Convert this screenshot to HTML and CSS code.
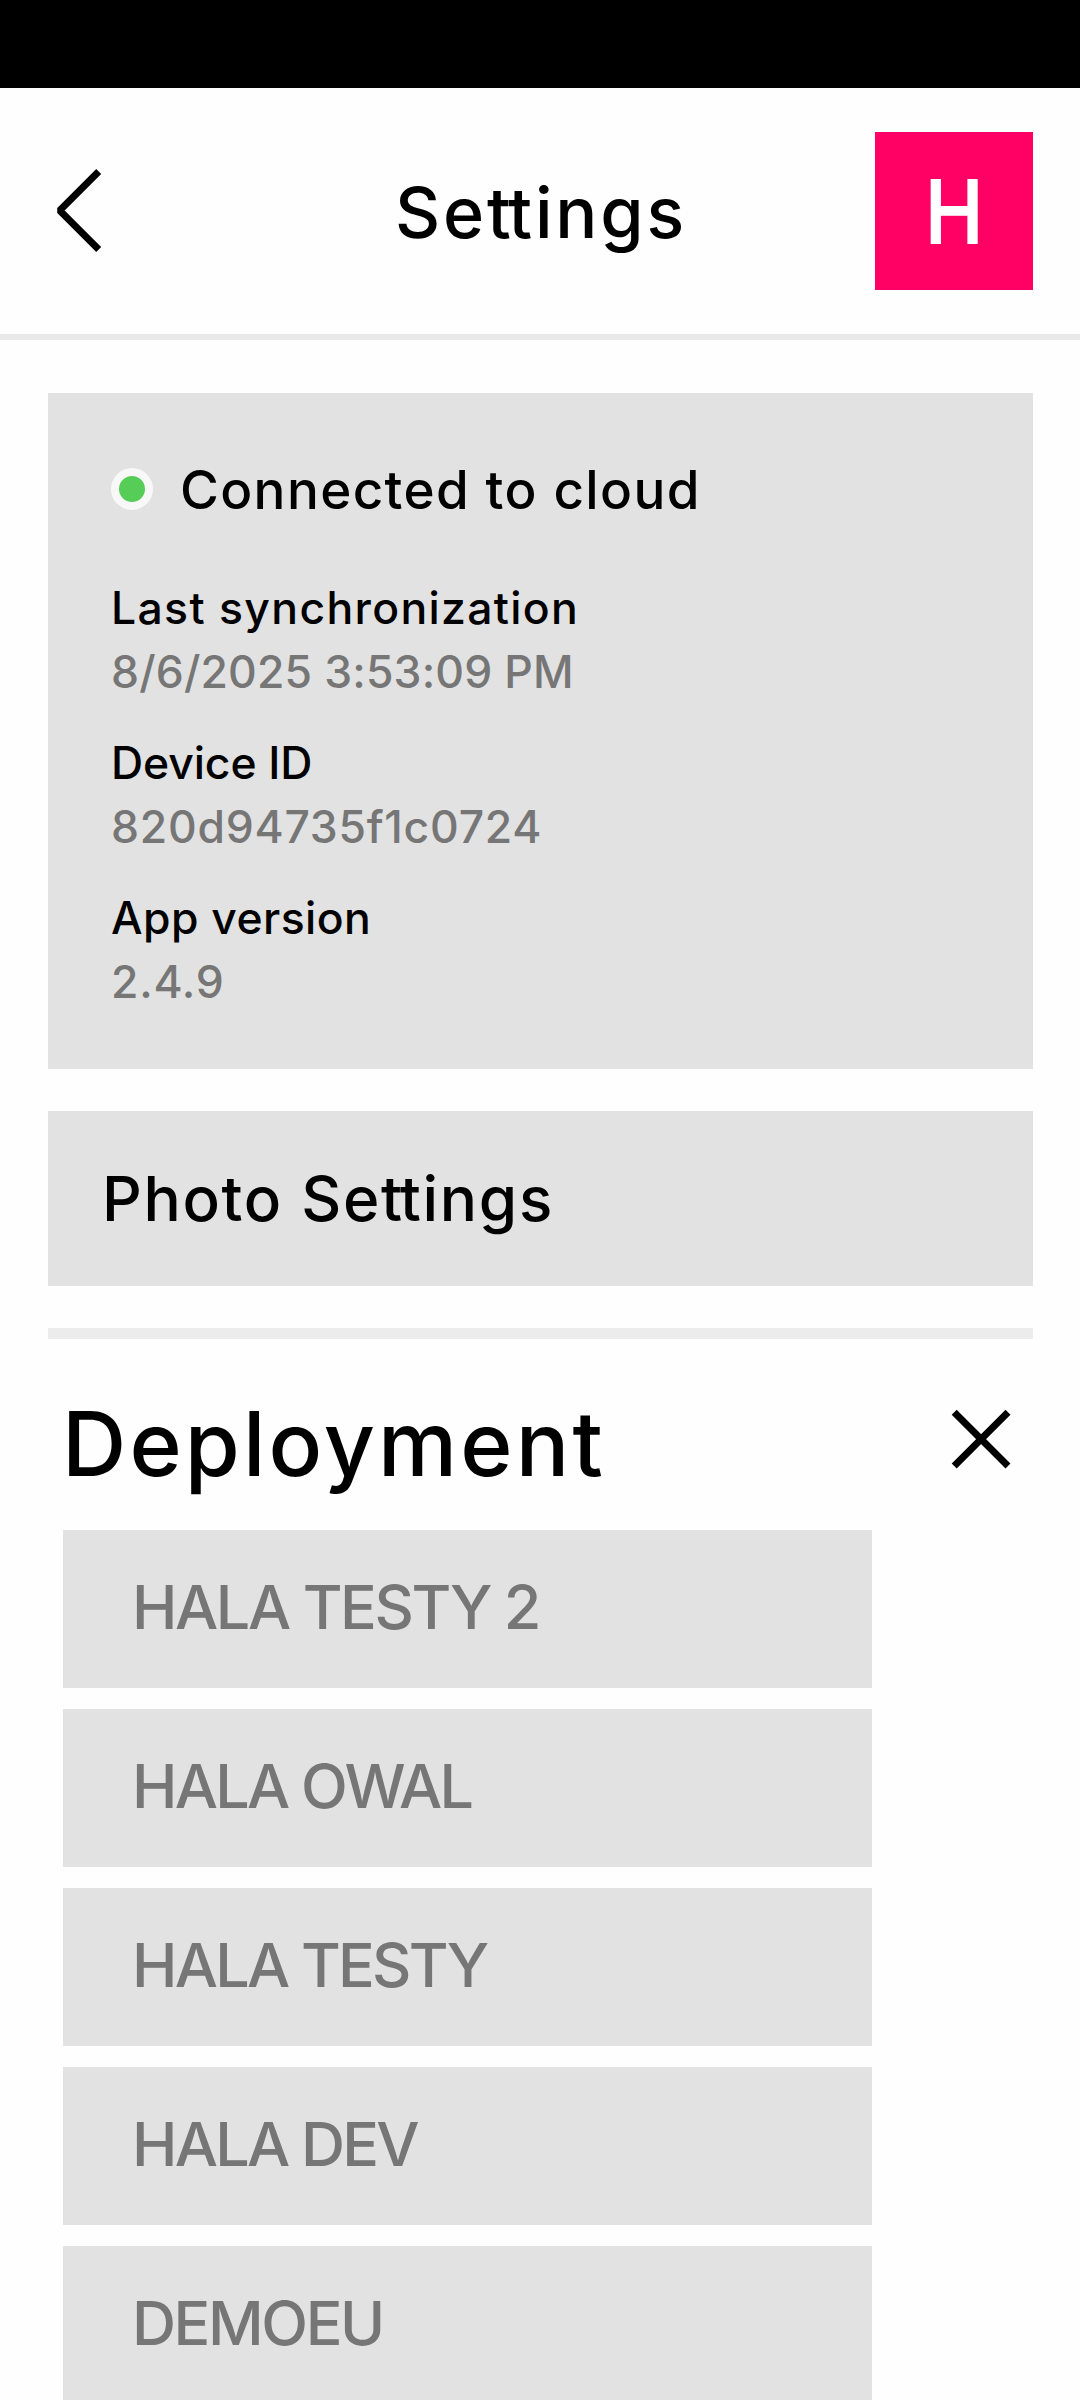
FILE: index.html
```
<!DOCTYPE html>
<html lang="en">
<head>
  <meta charset="utf-8">
  <title>Settings</title>
  <link rel="stylesheet" href="styles.css">
</head>
<body>
  <div class="status-bar"></div>
  <header class="topbar">
    <svg class="back" viewBox="0 0 60 158" width="60" height="158" aria-label="Back">
      <path d="M51.7 39.5 L12.7 78.5 L51.7 117.5" fill="none" stroke="#000" stroke-width="7" stroke-linejoin="bevel"/>
    </svg>
    <h1 class="topbar-title">Se<span class="tight">t</span>tings</h1>
    <div class="avatar"><span class="avatar-letter">H</span></div>
  </header>
  <main class="content">
    <section class="card">
      <div class="connection"><span class="dot"></span><span class="connection-text">Connected to cloud</span></div>
      <dl class="details">
        <div><dt class="sync-label">Last synchronization</dt><dd class="sync-value">8/6/2025 3:53:09 PM</dd></div>
        <div><dt class="device-label">Device ID</dt><dd>820d94735f1c0724</dd></div>
        <div><dt>App version</dt><dd>2.4.9</dd></div>
      </dl>
    </section>
    <section class="photo">Photo Se<span class="tight">t</span>tings</section>
    <hr class="divider">
    <section>
      <div class="deploy-head">
        <h2 class="deploy-title">Deployment</h2>
        <svg class="close" viewBox="0 0 60 60" width="60" height="60" aria-label="Close">
          <path d="M3.2 3.2 L57 57 M57 3.2 L3.2 57" fill="none" stroke="#000" stroke-width="7"/>
        </svg>
      </div>
      <ul class="deploy-list">
        <li>HALA TESTY 2</li>
        <li>HALA OWAL</li>
        <li>HALA TESTY</li>
        <li>HALA DEV</li>
        <li>DEMOEU</li>
      </ul>
    </section>
  </main>
</body>
</html>
```
FILE: styles.css
```
* {
  box-sizing: border-box;
  margin: 0;
  padding: 0;
}

body {
  height: 2400px;
  overflow: hidden;
  background: #fefefe;
  color: #000;
  font-family: "Inter", sans-serif;
  font-weight: 500;
}

.status-bar {
  height: 88px;
  background: #000;
}

.topbar {
  display: grid;
  grid-template-columns: 158px 1fr 158px;
  align-items: center;
  height: 252px;
  padding: 0 47px;
  border-bottom: 6px solid #e9e9e9;
}

.back {
  display: block;
}

.topbar-title {
  padding: 3px 0 0 2px;
  font-size: 70px;
  font-weight: 500;
  line-height: 84px;
  letter-spacing: 2.8px;
  text-align: center;
}

.tight {
  letter-spacing: -2.5px;
}

.avatar {
  display: flex;
  align-items: center;
  justify-content: center;
  width: 158px;
  height: 158px;
  padding-top: 1px;
  background: #ff0064;
  color: #fff;
  font-size: 89px;
  font-weight: 600;
}

.avatar-letter {
  display: block;
  line-height: 100px;
  transform: scaleX(0.88);
}

.content {
  padding: 53px 47px 0 48px;
}

.card {
  height: 676px;
  padding: 66px 63px 0;
  background: #e2e2e2;
}

.connection {
  display: flex;
  align-items: center;
  gap: 27px;
  height: 60px;
  margin-bottom: 57px;
  font-size: 53px;
  line-height: 60px;
  letter-spacing: 1.37px;
}

.connection-text {
  padding-top: 1px;
}

.dot {
  width: 42px;
  height: 42px;
  border: 8px solid #f8f8f8;
  border-radius: 50%;
  background: #56cd56;
}

.details {
  display: grid;
  gap: 27px;
  font-size: 44.5px;
  line-height: 64px;
  letter-spacing: 0.45px;
}

.details dd {
  color: #767676;
  letter-spacing: 0.75px;
}

.details .sync-label {
  letter-spacing: 1.33px;
}

.details .sync-value {
  letter-spacing: 0.15px;
}

.details .device-label {
  letter-spacing: -0.1px;
}

.photo {
  height: 175px;
  margin-top: 42px;
  padding: 1px 0 0 54px;
  background: #e2e2e2;
  font-size: 62px;
  line-height: 174px;
  letter-spacing: 1.7px;
}

.divider {
  height: 11px;
  margin-top: 42px;
  border: 0;
  background: #ececec;
}

.deploy-head {
  display: flex;
  align-items: flex-start;
  justify-content: space-between;
  height: 191px;
  padding: 54px 22px 0 14px;
}

.deploy-title {
  font-size: 89px;
  font-weight: 500;
  line-height: 101px;
  letter-spacing: 3.15px;
}

.close {
  display: block;
  margin-top: 16px;
}

.deploy-list {
  display: grid;
  gap: 21px;
  width: 809px;
  margin-left: 15px;
  list-style: none;
}

.deploy-list li {
  height: 158px;
  padding-left: 69px;
  background: #e2e2e2;
  color: #767676;
  font-size: 61px;
  line-height: 155px;
  letter-spacing: -2.75px;
}

.deploy-list li:first-child,
.deploy-list li:last-child {
  letter-spacing: -2.4px;
}
```
